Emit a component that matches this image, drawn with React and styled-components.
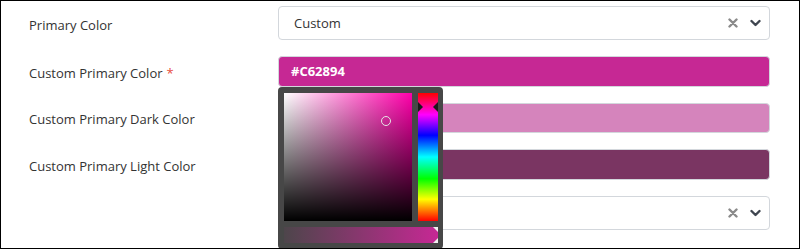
import React from "react";
import styled, { createGlobalStyle } from "styled-components";

const GlobalStyle = createGlobalStyle`
  html, body { margin: 0; padding: 0; background: #fff; }
  body { font-family: "Open Sans", "Noto Sans", sans-serif; }
  * { box-sizing: border-box; }
`;

const Frame = styled.div`
  width: 800px;
  height: 249px;
  border: 1px solid #000;
  overflow: hidden;
  background: #fff;
`;

const Form = styled.div`
  display: flex;
  flex-direction: column;
  gap: 16px;
  padding: 5px 29px 0 27px;
`;

const Row = styled.div`
  display: grid;
  grid-template-columns: 250px 1fr;
  align-items: center;
`;

const Label = styled.label`
  font-size: 13px;
  color: #333;
  padding: 3px 0 0 1px;
`;

const Required = styled.span`
  color: #e74c3c;
  margin-left: 4px;
`;

const Field = styled.div`
  position: relative;
`;

const SelectBox = styled.div`
  height: 34px;
  border: 1px solid #d3d7dc;
  border-radius: 4px;
  background: #fff;
  display: flex;
  align-items: center;
  padding: 0 8px 0 15px;
  font-size: 13px;
  color: #333;
`;

const SelectValue = styled.span`
  flex: 1;
`;

const SelectIcons = styled.div`
  display: flex;
  align-items: center;
  gap: 12px;
`;

const ColorInput = styled.div`
  height: 30.5px;
  border: 1px solid #d3d7dc;
  border-radius: 4px;
  background: ${(p) => p.$color};
  display: flex;
  align-items: center;
  padding-left: 12px;
  font-size: 13px;
  font-weight: 700;
  color: #fff;
`;

const Popover = styled.div`
  position: absolute;
  top: 30.5px;
  left: 0;
  width: 165px;
  background: #474747;
  border-radius: 4px;
  padding: 6px 5px 6px 6px;
  display: flex;
  flex-direction: column;
  gap: 6px;
  z-index: 5;
`;

const PickerTop = styled.div`
  display: flex;
  gap: 6px;
`;

const Saturation = styled.div`
  position: relative;
  width: 128px;
  height: 128px;
  background: linear-gradient(to top, #000, rgba(0, 0, 0, 0)),
    linear-gradient(to right, #fff, hsl(320, 100%, 50%));
`;

const Cursor = styled.div`
  position: absolute;
  width: 10px;
  height: 10px;
  border: 1px solid #e6e6e6;
  border-radius: 50%;
  transform: translate(-50%, -50%);
`;

const Hue = styled.div`
  position: relative;
  width: 20px;
  height: 128px;
  background: linear-gradient(
    to bottom,
    #f00 0%,
    #f0f 17%,
    #00f 33%,
    #0ff 50%,
    #0f0 67%,
    #ff0 83%,
    #f00 100%
  );
`;

const HueArrow = styled.div`
  position: absolute;
  top: ${(p) => p.$top}px;
  ${(p) => (p.$side === "left" ? "left: 0;" : "right: 0;")}
  width: 0;
  height: 0;
  border-top: 5px solid transparent;
  border-bottom: 5px solid transparent;
  ${(p) =>
    p.$side === "left"
      ? "border-left: 5px solid #1a1a1a;"
      : "border-right: 5px solid #1a1a1a;"}
  transform: translateY(-50%);
`;

const Alpha = styled.div`
  position: relative;
  width: 154px;
  height: 16px;
  background: linear-gradient(to right, rgba(198, 40, 148, 0.05), #c62894);
`;

const AlphaArrow = styled.div`
  position: absolute;
  right: 0;
  ${(p) => (p.$pos === "top" ? "top: 0;" : "bottom: 0;")}
  width: 0;
  height: 0;
  border-left: 5px solid transparent;
  ${(p) =>
    p.$pos === "top"
      ? "border-top: 5px solid #f0f0f0;"
      : "border-bottom: 5px solid #f0f0f0;"}
`;

const ClearIcon = () => (
  <svg width="10" height="10" viewBox="0 0 10 10">
    <path d="M1.5 1.5 L8.5 8.5 M8.5 1.5 L1.5 8.5" stroke="#8a8a8a" strokeWidth="2.4" strokeLinecap="round" />
  </svg>
);

const ChevronIcon = () => (
  <svg width="11" height="8" viewBox="0 0 11 8">
    <path d="M1.5 2 L5.5 6 L9.5 2" stroke="#3f4650" strokeWidth="2.4" fill="none" strokeLinecap="round" strokeLinejoin="round" />
  </svg>
);

const Select = ({ value }) => (
  <SelectBox>
    <SelectValue>{value}</SelectValue>
    <SelectIcons>
      <ClearIcon />
      <ChevronIcon />
    </SelectIcons>
  </SelectBox>
);

const ColorPicker = () => (
  <Popover>
    <PickerTop>
      <Saturation>
        <Cursor style={{ left: 102, top: 28 }} />
      </Saturation>
      <Hue>
        <HueArrow $side="left" $top={14} />
        <HueArrow $side="right" $top={14} />
      </Hue>
    </PickerTop>
    <Alpha>
      <AlphaArrow $pos="top" />
      <AlphaArrow $pos="bottom" />
    </Alpha>
  </Popover>
);

export default function App() {
  return (
    <>
      <GlobalStyle />
      <Frame>
        <Form>
          <Row>
            <Label>Primary Color</Label>
            <Select value="Custom" />
          </Row>
          <Row>
            <Label>
              Custom Primary Color<Required>*</Required>
            </Label>
            <Field>
              <ColorInput $color="#C62894">#C62894</ColorInput>
              <ColorPicker />
            </Field>
          </Row>
          <Row>
            <Label>Custom Primary Dark Color</Label>
            <ColorInput $color="#D584BC" />
          </Row>
          <Row>
            <Label>Custom Primary Light Color</Label>
            <ColorInput $color="#7A3562" />
          </Row>
          <Row>
            <Label />
            <Select value="" />
          </Row>
        </Form>
      </Frame>
    </>
  );
}
